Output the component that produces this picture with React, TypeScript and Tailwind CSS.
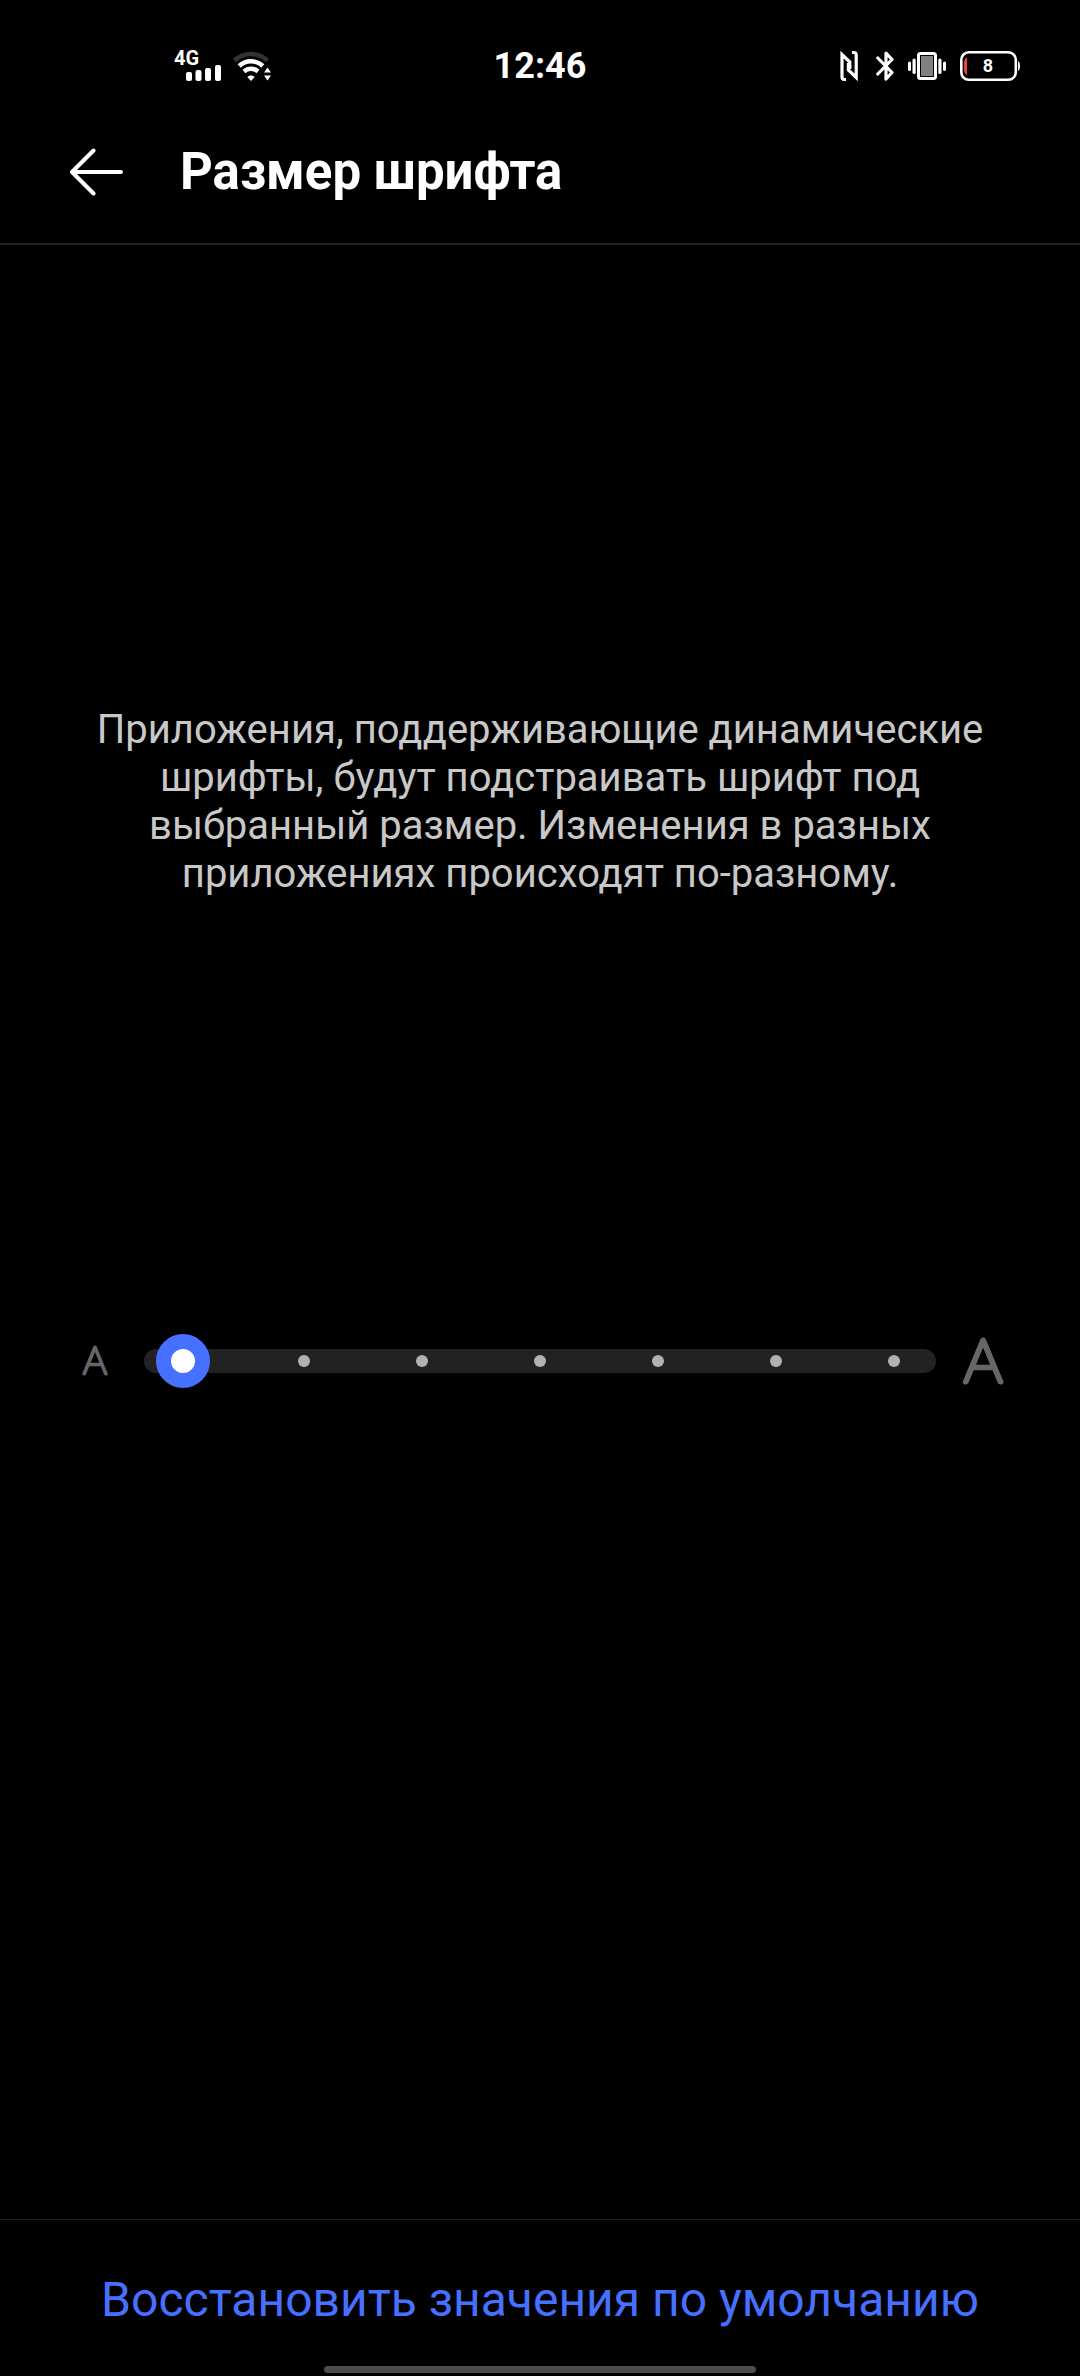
import React, { useState } from 'react';

const LAST_STEP = 6;

const SignalIcon = () => (
  <div className="relative w-12 h-8">
    <span className="absolute left-0 top-0 text-[20px] leading-4 font-bold">4G</span>
    <svg viewBox="0 0 48 32" className="w-12 h-8" fill="white" aria-hidden="true">
      <rect x="12" y="22" width="6" height="9" rx="2" />
      <rect x="21.5" y="20" width="6" height="11" rx="2" />
      <rect x="31" y="18" width="6" height="13" rx="2" />
      <rect x="41" y="15" width="6" height="16" rx="2" />
    </svg>
  </div>
);

const WifiIcon = () => (
  <svg viewBox="0 0 40 32" className="w-10 h-8" fill="none" aria-hidden="true">
    <path d="M2.5 10.5C12 1.8 26 1.8 35.5 10.5" stroke="#333" strokeWidth="4.5" />
    <path d="M7.2 16C14 9.7 24 9.7 30.8 16" stroke="white" strokeWidth="4.5" />
    <path d="M12 21.5C16 17.8 22 17.8 26 21.5" stroke="white" strokeWidth="4.5" />
    <path d="M19 31L15.3 27C17.3 25 20.7 25 22.7 27Z" fill="white" />
    <path d="M35.5 17.5L39 22.5H32ZM35.5 30.5L39 25.5H32Z" fill="white" />
  </svg>
);

const NfcIcon = () => (
  <svg viewBox="0 0 22 32" className="w-[22px] h-8" fill="none" stroke="white" strokeWidth="3.2" aria-hidden="true">
    <path d="M6 29.5H4.4Q2 29.5 2 27V4.5L9.8 12V19" />
    <path d="M12 2.5H13.8Q16.2 2.5 16.2 5V27.5L8.4 20V13" />
  </svg>
);

const BluetoothIcon = () => (
  <svg viewBox="0 0 18 32" className="w-[18px] h-8" fill="none" stroke="white" strokeWidth="3.2" strokeLinecap="round" strokeLinejoin="round" aria-hidden="true">
    <path d="M1.8 8L16 22.5L10 29V3L16 9.5L1.8 24" />
  </svg>
);

const VibrateIcon = () => (
  <svg viewBox="0 0 38 32" className="w-[38px] h-8" aria-hidden="true">
    <rect x="10.5" y="3.5" width="17" height="25" rx="2" fill="black" stroke="white" strokeWidth="3" />
    <rect x="13" y="6" width="12" height="20" fill="#808080" />
    <g fill="white">
      <rect x="4.5" y="8.5" width="3.2" height="15.5" rx="1.6" />
      <rect x="0" y="11.5" width="3" height="9.5" rx="1.5" />
      <rect x="30.3" y="8.5" width="3.2" height="15.5" rx="1.6" />
      <rect x="35" y="11.5" width="3" height="9.5" rx="1.5" />
    </g>
  </svg>
);

const BatteryIcon = ({ level }: { level: number }) => (
  <div className="relative w-[60px] h-8">
    <svg viewBox="0 0 60 32" className="w-[60px] h-8" aria-hidden="true">
      <rect x="1.3" y="2.3" width="54.5" height="27.5" rx="7.5" fill="none" stroke="white" strokeWidth="2.6" />
      <path d="M7 7V25Q4 23 4 20V12Q4 9 7 7Z" fill="#e8473b" />
      <path d="M58 11Q60 12 60 16Q60 20 58 21Z" fill="white" />
    </svg>
    <span className="absolute inset-y-0 left-0 w-14 text-center text-[18px] leading-8 font-bold">{level}</span>
  </div>
);

const SizeLetter = ({ className }: { className: string }) => (
  <svg viewBox="0 0 46 48" className={className} aria-hidden="true">
    <text x="23" y="45" textAnchor="middle" fontFamily="Lato, sans-serif" fontWeight="100" fontSize="60" fill="#666" stroke="#666" strokeWidth="5" strokeLinejoin="round">
      A
    </text>
  </svg>
);

export default function App() {
  const [step, setStep] = useState(0);

  return (
    <div className="min-h-screen flex flex-col bg-black text-white font-[Roboto,sans-serif]">
      {/* Status bar */}
      <div className="grid grid-cols-[1fr_auto_1fr] items-center h-[92px] pt-10 px-[60px]">
        <div className="flex items-center gap-2.5 pl-[114px]">
          <SignalIcon />
          <WifiIcon />
        </div>
        <span className="text-[36px] leading-10 font-bold">12:46</span>
        <div className="flex items-center justify-end gap-3.5">
          <NfcIcon />
          <BluetoothIcon />
          <VibrateIcon />
          <BatteryIcon level={8} />
        </div>
      </div>

      <header className="flex items-center gap-14 pt-12 pb-[39px] px-[70px] border-b-2 border-[#222]">
        <button type="button" aria-label="Назад" className="shrink-0">
          <svg viewBox="0 0 54 48" className="w-[54px] h-12" fill="none" stroke="white" strokeWidth="4" strokeLinecap="round" strokeLinejoin="round">
            <path d="M51 24H2M23.5 2.5L2 24L23.5 45.5" />
          </svg>
        </button>
        <h1 className="text-[51px] leading-[64px] font-bold">Размер шрифта</h1>
      </header>

      <main className="flex-1">
        <p className="pt-[461px] px-22 text-[40px] leading-12 text-center text-[#c8c8c8]">
          Приложения, поддерживающие динамические шрифты, будут подстраивать шрифт под выбранный размер. Изменения в разных приложениях происходят по-разному.
        </p>

        <div className="flex items-center mt-[436px] pl-20 pr-[74px]">
          <SizeLetter className="w-[30px] h-[30px] shrink-0 overflow-visible" />
          <div className="relative flex-1 h-[54px] flex items-center ml-[34px] mr-6">
            <div className="flex-1 flex items-center justify-between h-6 px-9 rounded-full bg-[#222]">
              {Array.from({ length: LAST_STEP + 1 }, (_, i) => (
                <span key={i} className="w-3 h-3 rounded-full bg-[#b2b2b2]" />
              ))}
            </div>
            {/* Native slider sits over the dots */}
            <div className="absolute inset-x-3 inset-y-0">
              <input
                type="range"
                aria-label="Размер шрифта"
                min={0}
                max={LAST_STEP}
                value={step}
                onChange={(e) => setStep(Number(e.target.value))}
                className="block w-full h-full appearance-none bg-transparent outline-none cursor-pointer [&::-webkit-slider-thumb]:appearance-none [&::-webkit-slider-thumb]:w-[54px] [&::-webkit-slider-thumb]:h-[54px] [&::-webkit-slider-thumb]:rounded-full [&::-webkit-slider-thumb]:bg-white [&::-webkit-slider-thumb]:border-[15px] [&::-webkit-slider-thumb]:border-solid [&::-webkit-slider-thumb]:border-[#4670ff]"
              />
            </div>
          </div>
          <SizeLetter className="w-[46px] h-12 shrink-0 overflow-visible" />
        </div>
      </main>

      <footer className="flex flex-col items-center border-t border-[#1a1a1a] pt-13 pb-[3px]">
        <button type="button" onClick={() => setStep(0)} className="text-[48px] leading-14 text-[#4670ff]">
          Восстановить значения по умолчанию
        </button>
        <div className="mt-[38px] w-2/5 h-[7px] rounded-full bg-[#4c4c4c]" />
      </footer>
    </div>
  );
}
